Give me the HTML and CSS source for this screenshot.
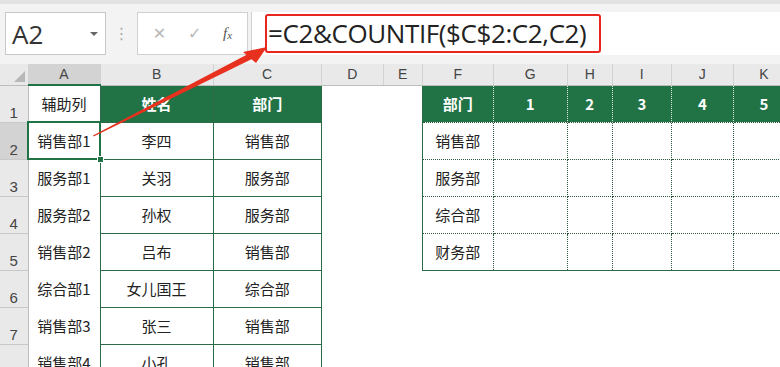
FILE: index.html
```html
<!DOCTYPE html>
<html lang="zh-CN">
<head>
  <meta charset="UTF-8">
  <title>COUNTIF 辅助列</title>
  <link rel="stylesheet" href="styles.css">
</head>
<body>

  <div class="topband"></div>

  <div class="formula-bar">
    <div class="name-box">
      <span class="cell-ref">A2</span>
      <span class="dropdown"></span>
    </div>
    <div class="grip">⋮</div>
    <div class="fx-buttons">
      <span class="btn-cancel">✕</span>
      <span class="btn-ok">✓</span>
      <span class="btn-fx">f<sub>x</sub></span>
    </div>
    <div class="formula-input">
      <div class="formula-mark">=C2&amp;COUNTIF($C$2:C2,C2)</div>
    </div>
  </div>

  <div class="sheet">
    <table class="grid">
      <colgroup>
        <col class="w-hdr"><col class="w-a"><col class="w-b"><col class="w-c"><col class="w-d"><col class="w-e">
        <col class="w-f"><col class="w-g"><col class="w-h"><col class="w-i"><col class="w-j"><col class="w-k">
      </colgroup>
      <thead>
        <tr>
          <th class="corner"><span class="corner-tri"></span></th>
          <th class="col-sel">A</th><th>B</th><th>C</th><th>D</th><th>E</th>
          <th>F</th><th>G</th><th>H</th><th>I</th><th>J</th><th>K</th>
        </tr>
      </thead>
      <tbody>
        <tr>
          <th class="rh">1</th>
          <td>辅助列</td>
          <td class="lt head">姓名</td>
          <td class="lt head">部门</td>
          <td></td><td></td>
          <td class="rt head first">部门</td>
          <td class="rt head">1</td><td class="rt head">2</td><td class="rt head">3</td><td class="rt head">4</td><td class="rt head">5</td>
        </tr>
        <tr>
          <th class="rh row-sel">2</th>
          <td class="sel">销售部1</td>
          <td class="lt">李四</td><td class="lt">销售部</td>
          <td></td><td></td>
          <td class="rt first">销售部</td><td class="rt"></td><td class="rt"></td><td class="rt"></td><td class="rt"></td><td class="rt"></td>
        </tr>
        <tr>
          <th class="rh">3</th>
          <td>服务部1</td>
          <td class="lt">关羽</td><td class="lt">服务部</td>
          <td></td><td></td>
          <td class="rt first">服务部</td><td class="rt"></td><td class="rt"></td><td class="rt"></td><td class="rt"></td><td class="rt"></td>
        </tr>
        <tr>
          <th class="rh">4</th>
          <td>服务部2</td>
          <td class="lt">孙权</td><td class="lt">服务部</td>
          <td></td><td></td>
          <td class="rt first">综合部</td><td class="rt"></td><td class="rt"></td><td class="rt"></td><td class="rt"></td><td class="rt"></td>
        </tr>
        <tr>
          <th class="rh">5</th>
          <td>销售部2</td>
          <td class="lt">吕布</td><td class="lt">销售部</td>
          <td></td><td></td>
          <td class="rt first last">财务部</td><td class="rt last"></td><td class="rt last"></td><td class="rt last"></td><td class="rt last"></td><td class="rt last"></td>
        </tr>
        <tr>
          <th class="rh">6</th>
          <td>综合部1</td>
          <td class="lt">女儿国王</td><td class="lt">综合部</td>
          <td></td><td></td><td></td><td></td><td></td><td></td><td></td><td></td>
        </tr>
        <tr>
          <th class="rh">7</th>
          <td>销售部3</td>
          <td class="lt">张三</td><td class="lt">销售部</td>
          <td></td><td></td><td></td><td></td><td></td><td></td><td></td><td></td>
        </tr>
        <tr>
          <th class="rh">8</th>
          <td>销售部4</td>
          <td class="lt">小孔</td><td class="lt">销售部</td>
          <td></td><td></td><td></td><td></td><td></td><td></td><td></td><td></td>
        </tr>
      </tbody>
    </table>
  </div>

  <svg class="pointer" width="780" height="367" viewBox="0 0 780 367">
    <polygon points="93,135.5 250,53 253,58.5 93.6,136.6" fill="#e8301f"/>
    <polygon points="267,47 243,52 256,63" fill="#e8301f"/>
  </svg>

</body>
</html>
```

FILE: styles.css
```css
body {
  margin: 0;
  background: #f3f3f3;
  font-family: "Noto Sans CJK SC", sans-serif;
  color: #222;
  overflow: hidden;
  position: relative;
  width: 780px;
  height: 367px;
}
.topband {
  height: 4px;
  background: #e2e2e2;
}
.formula-bar {
  display: flex;
  align-items: stretch;
  height: 43px;
  margin-top: 8px;
  padding-left: 5px;
}
.name-box {
  width: 101px;
  background: #fff;
  border: 1px solid #c8c8c8;
  display: flex;
  align-items: center;
  justify-content: space-between;
  padding: 0 7px 0 6px;
  box-sizing: border-box;
}
.cell-ref {
  font-family: "Open Sans", sans-serif;
  font-size: 26px;
  color: #333;
}
.dropdown {
  width: 0;
  height: 0;
  border-left: 4px solid transparent;
  border-right: 4px solid transparent;
  border-top: 4px solid #666;
}
.grip {
  width: 31px;
  text-align: center;
  color: #aaa;
  font-family: "DejaVu Sans", sans-serif;
  font-size: 16px;
  line-height: 43px;
}
.fx-buttons {
  width: 111px;
  background: #fff;
  border: 1px solid #d0d0d0;
  box-sizing: border-box;
  display: flex;
  align-items: center;
  justify-content: space-around;
  padding: 0 4px;
  font-family: "DejaVu Sans", sans-serif;
}
.btn-cancel, .btn-ok {
  color: #b8b8b8;
  font-size: 16px;
}
.btn-fx {
  font-family: "Liberation Serif", serif;
  font-style: italic;
  color: #555;
  font-size: 15px;
}
.btn-fx sub {
  font-size: 11px;
  vertical-align: -1px;
}
.formula-input {
  flex: 1;
  margin-left: 3px;
  background: #fff;
  border-left: 1px solid #d0d0d0;
  padding: 2px 0 0 13px;
}
.formula-mark {
  display: inline-block;
  width: 331px;
  height: 35px;
  border: 2px solid #e8261f;
  border-radius: 3px;
  font-family: "Open Sans", sans-serif;
  font-size: 26px;
  line-height: 35px;
  padding-left: 1px;
  color: #222;
  letter-spacing: -0.4px;
}
.sheet {
  margin-top: 9px;
  background: #fff;
}
.grid {
  border-collapse: collapse;
  table-layout: fixed;
  width: 795px;
}
.w-hdr { width: 28px; }
.w-a { width: 72px; }
.w-b { width: 113px; }
.w-c { width: 108px; }
.w-d { width: 62px; }
.w-e { width: 39px; }
.w-f { width: 71px; }
.w-g { width: 74px; }
.w-h { width: 45px; }
.w-i { width: 59px; }
.w-j { width: 62px; }
.w-k { width: 61px; }
thead tr {
  height: 21px;
}
thead th {
  padding: 0;
  background: #e9e9e9;
  border-right: 1px solid #d2d2d2;
  border-bottom: 1px solid #bdbdbd;
  font-family: "Liberation Sans", sans-serif;
  font-weight: normal;
  font-size: 14px;
  color: #444;
}
thead th.col-sel {
  background: #d3d3d3;
  border-bottom: 2px solid #217346;
}
.corner {
  position: relative;
}
.corner-tri {
  position: absolute;
  right: 3px;
  bottom: 3px;
  width: 0;
  height: 0;
  border-left: 11px solid transparent;
  border-bottom: 11px solid #b8b8b8;
}
tbody tr {
  height: 37px;
}
.rh {
  padding: 0 0 1px 0;
  background: #e9e9e9;
  border-bottom: 1px solid #c8c8c8;
  border-right: 1px solid #bdbdbd;
  vertical-align: bottom;
  text-align: center;
  font-family: "Liberation Sans", sans-serif;
  font-weight: normal;
  font-size: 15px;
  line-height: 17px;
  color: #444;
}
.rh.row-sel {
  background: #d3d3d3;
}
td {
  padding: 0;
  text-align: center;
  font-size: 15px;
  line-height: 20px;
  color: #222;
}
td.lt {
  border: 1px solid #2d6a47;
}
td.head {
  background: #217346;
  color: #fff;
  font-weight: bold;
  font-size: 15px;
}
td.rt {
  border: 1px dotted #2d5a3c;
}
td.rt.head {
  border-left: 1px dotted #dfe9e2;
  border-right: 1px dotted #dfe9e2;
  border-top: none;
  border-bottom: none;
}
td.rt.first {
  border-left: 1px solid #2d6a47;
}
td.rt.last {
  border-bottom: 1px solid #2d6a47;
}
td.sel {
  position: relative;
  outline: 2px solid #217346;
  outline-offset: -1px;
}
td.sel::after {
  content: "";
  position: absolute;
  right: -4px;
  bottom: -4px;
  width: 5px;
  height: 5px;
  background: #217346;
  border: 1px solid #fff;
}
.pointer {
  position: absolute;
  left: 0;
  top: 0;
}
```
